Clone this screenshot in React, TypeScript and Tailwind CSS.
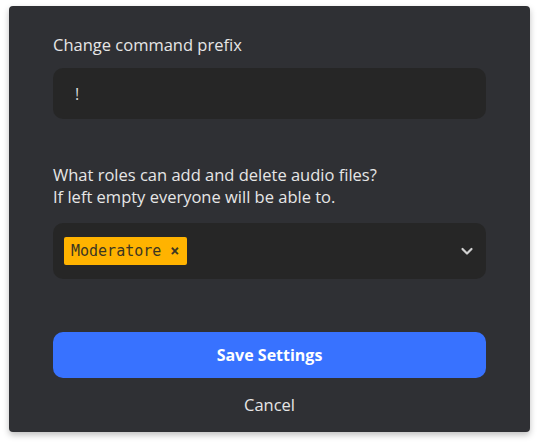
import React from "react";

export default function App() {
  return (
    <div className="w-[539px] h-[445px] bg-white pt-[6px] pl-[9px]" style={{ fontFamily: '"Open Sans", "Noto Sans", sans-serif' }}>
      <div className="w-[521px] h-[426px] bg-[#2f3034] rounded-[4px] shadow-[0_3px_6px_rgba(0,0,0,0.25)] px-[44px] pt-[27px] flex flex-col">
        <div className="text-[16.5px] leading-[24px] text-[#e6e6e6]">Change command prefix</div>
        <div className="mt-[11px] h-[51px] rounded-[10px] bg-[#262626] flex items-center pl-[22px] text-[16px] text-[#dcdcdc]">!</div>
        <div className="mt-[45px] text-[16.5px] leading-[22px] text-[#e6e6e6]">
          What roles can add and delete audio files?
          <br />
          If left empty everyone will be able to.
        </div>
        <div className="mt-[15px] h-[56px] rounded-[10px] bg-[#262626] flex items-center pl-[11px] pr-[12px]">
          <div className="h-[28px] bg-[#ffb300] rounded-[2px] flex items-center pl-[7px] pr-[8px] gap-[9px] text-[15px] font-medium text-[#3b3622]" style={{ fontFamily: '"DejaVu Sans Mono", "Liberation Mono", monospace' }}>
            <span>Moderatore</span>
            <span className="font-bold">×</span>
          </div>
          <div className="flex-1" />
          <svg width="14" height="14" viewBox="0 0 14 14" fill="none">
            <path d="M2.5 5l4.5 4.5L11.5 5" stroke="#d0d0d0" strokeWidth="2.2" strokeLinecap="round" strokeLinejoin="round" />
          </svg>
        </div>
        <button className="mt-[53px] h-[46px] rounded-[10px] bg-[#3872ff] text-white text-[16px] font-bold w-full">Save Settings</button>
        <div className="mt-[15px] text-center text-[16.5px] text-[#e6e6e6]">Cancel</div>
      </div>
    </div>
  );
}
